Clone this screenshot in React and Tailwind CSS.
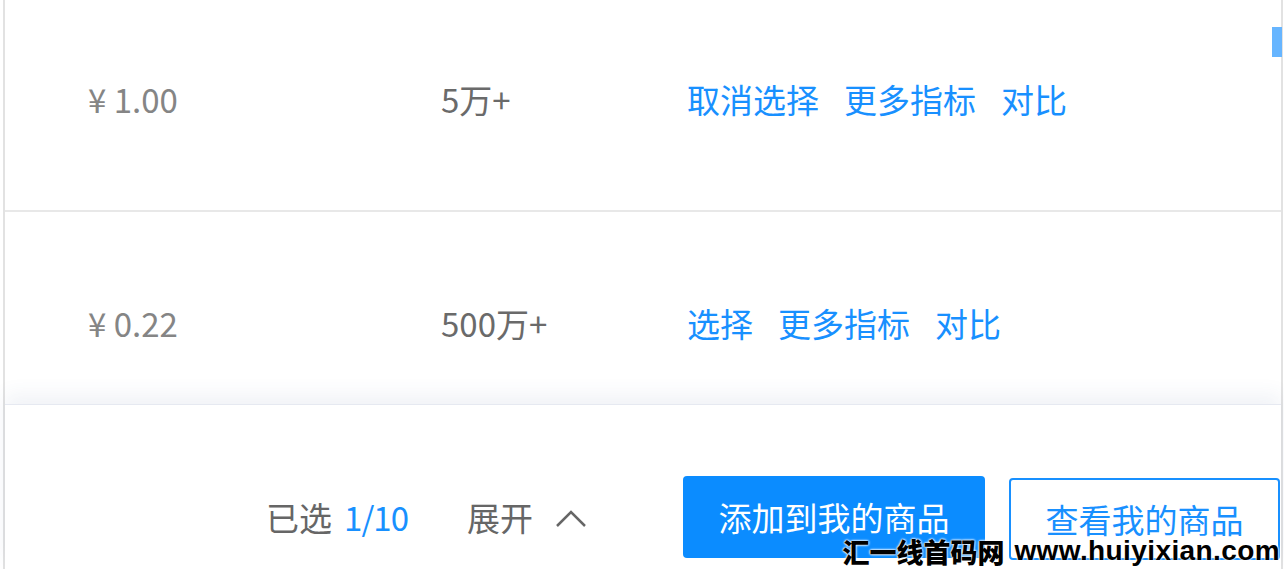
import React from 'react';

const rows = [
  { price: '¥ 1.00', sales: '5万+', selected: true },
  { price: '¥ 0.22', sales: '500万+', selected: false },
];

function ProductRow({ price, sales, selected }) {
  return (
    <div className="flex items-center h-[224px] shrink-0 border-b-2 border-[#e8e8e8] text-[33px] leading-none">
      <div className="w-[436px] pl-[83px] text-[#858585]">{price}</div>
      <div className="w-[246px] text-[#6a6a6a]">{sales}</div>
      <div className="flex gap-[25px] text-[#1890ff]">
        <span>{selected ? '取消选择' : '选择'}</span>
        <span>更多指标</span>
        <span>对比</span>
      </div>
    </div>
  );
}

export default function App() {
  return (
    <div
      className="relative w-[1284px] h-[569px] overflow-hidden bg-white"
      style={{ fontFamily: '"Noto Sans CJK SC", "Microsoft YaHei", sans-serif' }}
    >
      <div className="ml-[3px] mr-[1px] h-full flex flex-col border-l-2 border-r-2 border-[#e2e2e2]">
        {/* scrolling list */}
        <div className="h-[404px] shrink-0 overflow-hidden">
          <div className="-mt-[12px] flex flex-col">
            {rows.map((r) => (
              <ProductRow key={r.price} {...r} />
            ))}
          </div>
        </div>

        {/* action bar */}
        <div className="relative z-10 flex-1 flex items-start justify-end pt-[71px] pr-[1px] bg-white border-t border-[#e6e9f1] shadow-[0_-10px_18px_rgba(60,80,140,0.07)]">
          <div className="flex items-center h-[82px] text-[33px] leading-none">
            <span className="text-[#666]">已选</span>
            <span className="ml-[12px] text-[#1890ff] tracking-[-1px]">1/10</span>
            <span className="ml-[59px] text-[#666]">展开</span>
            <svg className="ml-[22px] mt-[2px]" width="32" height="20" viewBox="0 0 32 20" fill="none">
              <polyline points="2,18 16,4 30,18" stroke="#666" strokeWidth="2.5" />
            </svg>
            <button className="ml-[96px] w-[302px] h-[82px] rounded-[4px] bg-[#0b8cff] text-white">
              添加到我的商品
            </button>
            <button className="ml-[24px] w-[271px] h-[82px] mt-[4px] rounded-[4px] border-2 border-[#1890ff] bg-white text-[#1890ff]">
              查看我的商品
            </button>
          </div>
        </div>
      </div>

      {/* scrollbar thumb */}
      <div className="absolute left-[1272px] top-[27px] w-[10px] h-[30px] bg-[#66b5ff]" />

      {/* site watermark */}
      <div
        className="absolute z-20 right-[4px] bottom-[4px] flex items-end gap-[10px] text-black font-black leading-none"
        style={{ textShadow: '0 0 2px #fff, 0 0 2px #fff, 0 0 3px #fff' }}
      >
        <span className="text-[27px]">汇一线首码网</span>
        <span
          className="text-[28px] font-bold tracking-[0.4px]"
          style={{ fontFamily: '"Liberation Sans", Arial, sans-serif' }}
        >
          www.huiyixian.com
        </span>
      </div>
    </div>
  );
}
